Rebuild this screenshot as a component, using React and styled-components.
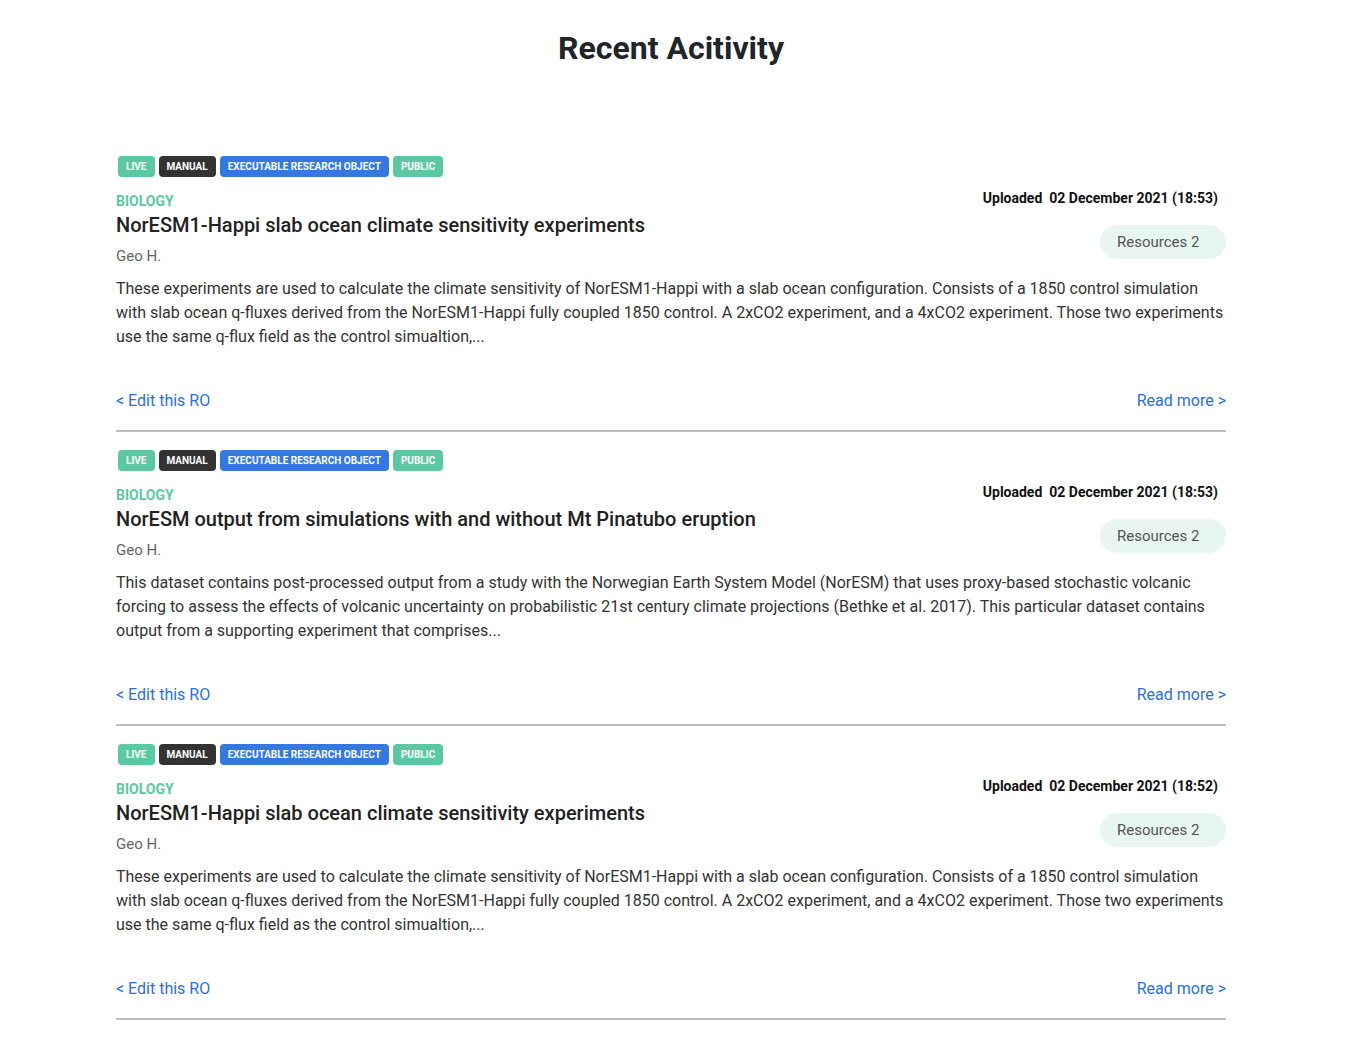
import React from "react";
import styled, { createGlobalStyle } from "styled-components";

const GlobalStyle = createGlobalStyle`
  html, body { margin: 0; padding: 0; background: #fff; }
  body { font-family: Roboto, "Liberation Sans", Arial, sans-serif; color: #222; }
  * { box-sizing: border-box; }
`;

const Page = styled.main`
  width: 1110px;
  margin-left: 116px;
  padding-top: 28px;
  padding-bottom: 30px;
`;

const Heading = styled.h1`
  margin: 0;
  text-align: center;
  font-size: 32px;
  line-height: 40px;
  font-weight: 700;
  color: #212529;
`;

const List = styled.div`
  margin-top: 68px;
`;

const Card = styled.article`
  padding-top: 20px;
  padding-bottom: 17px;
  border-bottom: 2px solid #bcbcbc;
  & + & { padding-top: 18px; }
`;

const Tags = styled.div`
  display: flex;
  gap: 4px;
  padding-left: 2px;
`;

const Tag = styled.span`
  display: inline-flex;
  align-items: center;
  height: 21px;
  padding: 0 8px;
  border-radius: 4px;
  font-size: 10px;
  font-weight: 700;
  text-transform: uppercase;
  color: #fff;
  background: ${(p) => p.$bg};
`;

const Header = styled.div`
  display: flex;
  justify-content: space-between;
  align-items: flex-start;
`;

const Left = styled.div`
  display: flex;
  flex-direction: column;
  padding-top: 16px;
`;

const Category = styled.div`
  font-size: 14px;
  line-height: 16px;
  font-weight: 700;
  color: #5cc8a3;
  text-transform: uppercase;
`;

const Title = styled.h2`
  margin: 4px 0 0;
  font-size: 20px;
  line-height: 24px;
  font-weight: 500;
  color: #222;
`;

const Author = styled.div`
  margin-top: 8px;
  font-size: 15px;
  line-height: 22px;
  color: #666;
`;

const Right = styled.div`
  display: flex;
  flex-direction: column;
  align-items: flex-end;
  padding-top: 13px;
`;

const Uploaded = styled.div`
  font-size: 14px;
  line-height: 17px;
  font-weight: 700;
  color: #111;
  padding-right: 8px;
  white-space: pre;
`;

const Pill = styled.span`
  margin-top: 18px;
  display: inline-flex;
  align-items: center;
  height: 34px;
  width: 126px;
  padding-left: 17px;
  border-radius: 17px;
  background: #e7f6f0;
  color: #555;
  font-size: 15px;
`;

const Description = styled.p`
  margin: 10px 0 0;
  font-size: 16px;
  line-height: 24px;
  color: #333;
`;

const Links = styled.div`
  display: flex;
  justify-content: space-between;
  margin-top: 40px;
`;

const Link = styled.a`
  font-size: 16px;
  line-height: 24px;
  color: #2a6fdb;
  text-decoration: none;
  cursor: pointer;
`;

const GREEN = "#5cc8a3";

const d1 =
  "These experiments are used to calculate the climate sensitivity of NorESM1-Happi with a slab ocean configuration. Consists of a 1850 control simulation with slab ocean q-fluxes derived from the NorESM1-Happi fully coupled 1850 control. A 2xCO2 experiment, and a 4xCO2 experiment. Those two experiments use the same q-flux field as the control simualtion,...";
const d2 =
  "This dataset contains post-processed output from a study with the Norwegian Earth System Model (NorESM) that uses proxy-based stochastic volcanic forcing to assess the effects of volcanic uncertainty on probabilistic 21st century climate projections (Bethke et al. 2017). This particular dataset contains output from a supporting experiment that comprises...";

const items = [
  { title: "NorESM1-Happi slab ocean climate sensitivity experiments", time: "02 December 2021 (18:53)", desc: d1 },
  { title: "NorESM output from simulations with and without Mt Pinatubo eruption", time: "02 December 2021 (18:53)", desc: d2 },
  { title: "NorESM1-Happi slab ocean climate sensitivity experiments", time: "02 December 2021 (18:52)", desc: d1 },
];

export default function App() {
  return (
    <>
      <GlobalStyle />
      <Page>
        <Heading>Recent Acitivity</Heading>
        <List>
          {items.map((it, i) => (
            <Card key={i}>
              <Tags>
                <Tag $bg={GREEN}>Live</Tag>
                <Tag $bg="#333333">Manual</Tag>
                <Tag $bg="#3478e0">Executable Research Object</Tag>
                <Tag $bg={GREEN}>Public</Tag>
              </Tags>
              <Header>
                <Left>
                  <Category>Biology</Category>
                  <Title>{it.title}</Title>
                  <Author>Geo H.</Author>
                </Left>
                <Right>
                  <Uploaded>{"Uploaded  " + it.time}</Uploaded>
                  <Pill>Resources 2</Pill>
                </Right>
              </Header>
              <Description>{it.desc}</Description>
              <Links>
                <Link>&lt; Edit this RO</Link>
                <Link>Read more &gt;</Link>
              </Links>
            </Card>
          ))}
        </List>
      </Page>
    </>
  );
}
